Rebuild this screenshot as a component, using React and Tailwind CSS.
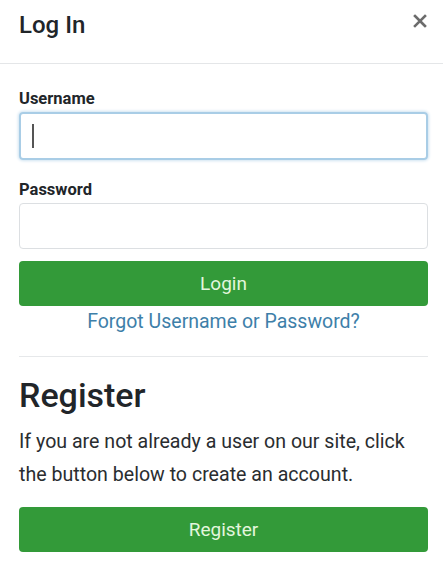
import React, { useState } from 'react';

const App = () => {
  const [form, setForm] = useState({ username: '', password: '' });

  const handleChange = (e) => {
    const { name, value } = e.target;
    setForm((s) => ({ ...s, [name]: value }));
  };

  return (
    <div className="w-[443px] h-[576px] bg-white text-[#212529] font-['Roboto',sans-serif] overflow-hidden">
      {/* cabecera */}
      <div className="h-[64px] flex items-center justify-between pl-[19px] pr-[16px] border-b border-[#e4e6e8]">
        <h2 className="text-[24px] font-medium leading-none -mt-[14px]">Log In</h2>
        <button className="text-[#6c6c6c] -mt-[22px]">
          <svg width="14" height="14" viewBox="0 0 14 14">
            <path d="M2 2 L12 12 M12 2 L2 12" stroke="currentColor" strokeWidth="2.6" strokeLinecap="square" />
          </svg>
        </button>
      </div>

      <div className="pl-[19px] pr-[15px]">
        <label className="block text-[16.5px] font-bold mt-[25px] leading-[20px]">Username</label>
        <div className="relative mt-[3px]">
          <input
            name="username"
            value={form.username}
            onChange={handleChange}
            className="block w-full h-[48px] rounded-[4px] border-2 border-[#a9cde6] shadow-[0_0_3px_1px_#cfe3f1] outline-none px-[12px] text-[18px]"
          />
          {/* cursor */}
          {!form.username && <span className="absolute left-[13px] top-[12px] w-[1.5px] h-[24px] bg-[#555]"></span>}
        </div>
        <label className="block text-[16.5px] font-bold mt-[20px] leading-[20px]">Password</label>
        <input
          name="password"
          type="password"
          value={form.password}
          onChange={handleChange}
          className="mt-[3px] block w-full h-[46px] rounded-[4px] border border-[#dcdfe2] outline-none px-[12px] text-[18px]"
        />
        <button className="mt-[12px] w-full h-[45px] rounded-[4px] bg-[#339a39] text-[#e3f6dd] text-[19px] leading-none">
          Login
        </button>
        <div className="text-center mt-[4px]">
          <a href="#" className="text-[19.5px] text-[#3e7fa9] leading-[24px]">Forgot Username or Password?</a>
        </div>

        <div className="mt-[21px] border-t border-[#e6e8ea]"></div>

        <h2 className="text-[34px] font-medium mt-[18px] leading-[40px]">Register</h2>
        <p className="text-[19.6px] leading-[33px] mt-[10px] text-[#2a2d30]">
          If you are not already a user on our site, click the button below to create an account.
        </p>
        <button className="mt-[16px] w-full h-[45px] rounded-[4px] bg-[#339a39] text-[#e3f6dd] text-[19px] leading-none">
          Register
        </button>
      </div>
    </div>
  );
};

export default App;
